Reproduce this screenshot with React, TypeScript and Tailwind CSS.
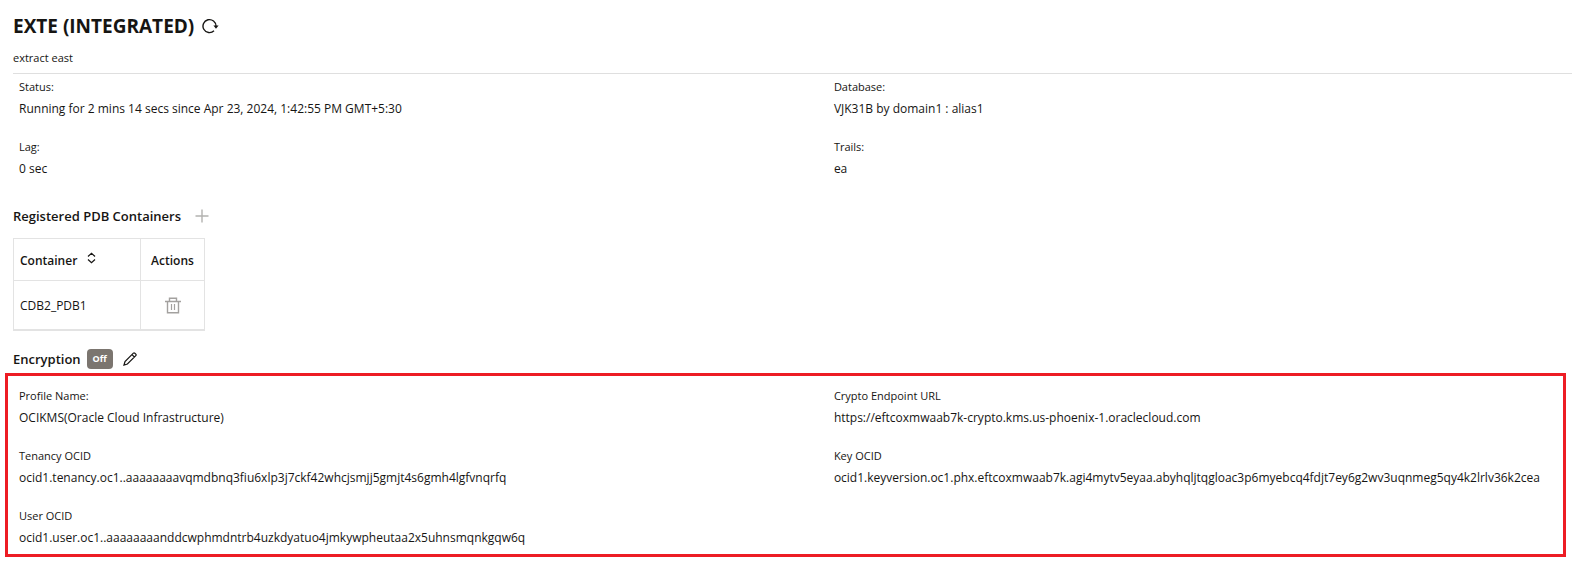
import { useState } from 'react';

type FieldData = { label: string; value: string };

const processInfo: FieldData[] = [
  { label: 'Status:', value: 'Running for 2 mins 14 secs since Apr 23, 2024, 1:42:55 PM GMT+5:30' },
  { label: 'Database:', value: 'VJK31B by domain1 : alias1' },
  { label: 'Lag:', value: '0 sec' },
  { label: 'Trails:', value: 'ea' },
];

const encryptionInfo: FieldData[] = [
  { label: 'Profile Name:', value: 'OCIKMS(Oracle Cloud Infrastructure)' },
  { label: 'Crypto Endpoint URL', value: 'https://eftcoxmwaab7k-crypto.kms.us-phoenix-1.oraclecloud.com' },
  { label: 'Tenancy OCID', value: 'ocid1.tenancy.oc1..aaaaaaaavqmdbnq3fiu6xlp3j7ckf42whcjsmjj5gmjt4s6gmh4lgfvnqrfq' },
  { label: 'Key OCID', value: 'ocid1.keyversion.oc1.phx.eftcoxmwaab7k.agi4mytv5eyaa.abyhqljtqgloac3p6myebcq4fdjt7ey6g2wv3uqnmeg5qy4k2lrlv36k2cea' },
  { label: 'User OCID', value: 'ocid1.user.oc1..aaaaaaaanddcwphmdntrb4uzkdyatuo4jmkywpheutaa2x5uhnsmqnkgqw6q' },
];

function FieldGrid({ fields }: { fields: FieldData[] }) {
  return (
    <dl className="grid grid-cols-[minmax(0,19fr)_minmax(0,17fr)] gap-y-5">
      {fields.map(({ label, value }) => (
        <div key={label}>
          <dt className="text-[11px] leading-4">{label}</dt>
          <dd className="mt-1 text-[12px] leading-5 whitespace-nowrap">{value}</dd>
        </div>
      ))}
    </dl>
  );
}

function RefreshIcon() {
  return (
    <svg width="18" height="16" viewBox="0 0 18 16" fill="none">
      <path d="M12 12.8A6.5 6.5 0 1 1 14 8.2" stroke="currentColor" strokeWidth="1.4" />
      <path d="M11.4 7.4h5.2L14 10.8z" fill="currentColor" />
    </svg>
  );
}

function PlusIcon() {
  return (
    <svg width="14" height="14" viewBox="0 0 14 14" fill="none" stroke="currentColor">
      <path d="M7 0.5v13M0.5 7h13" strokeWidth="1.4" />
    </svg>
  );
}

function SortIcon() {
  return (
    <svg width="9" height="12" viewBox="0 0 9 12" fill="none" stroke="currentColor">
      <path d="M1 4.5l3.5-3.3L8 4.5M1 7.5l3.5 3.3L8 7.5" strokeWidth="1.2" />
    </svg>
  );
}

function TrashIcon() {
  return (
    <svg width="16" height="17" viewBox="0 0 16 17" fill="none" stroke="currentColor">
      <path d="M0 4.5h16M4.5 4V1.2h7V4M2.5 5v10.7h11V5" strokeWidth="1.4" />
      <path d="M6.5 7v6M9.5 7v6" strokeWidth="1.2" />
    </svg>
  );
}

function PencilIcon() {
  return (
    <svg width="14" height="14" viewBox="0 0 14 14" fill="none" stroke="currentColor">
      <path d="M1 13l1-3.4L10.4 1.2a1 1 0 0 1 1.4 0l1 1a1 1 0 0 1 0 1.4L4.4 12zM9 2.6L11.4 5" strokeWidth="1.2" />
    </svg>
  );
}

export default function App() {
  const [ containers, setContainers ] = useState(['CDB2_PDB1']);

  const handleDelete = (name: string) => {
    setContainers(containers.filter((container) => container !== name))
  }

  return (
    <main className="bg-white pb-2 font-['Open_Sans',sans-serif] text-[#161513]">
      <header className="ml-[13px] border-b border-[#dfdfdf] pt-3 pb-[7px]">
        <div className="flex items-center gap-2">
          <h1 className="text-[19px] leading-7 font-bold">EXTE (INTEGRATED)</h1>
          <button type="button" aria-label="Refresh" className="cursor-pointer"><RefreshIcon /></button>
        </div>
        <p className="mt-[10px] text-[11px] leading-4">extract east</p>
      </header>

      <section className="pt-[5px] pr-[9px] pl-[19px]">
        <FieldGrid fields={processInfo} />
      </section>

      <section className="mt-[27px] ml-[13px]">
        <div className="flex items-center gap-[14px]">
          <h2 className="text-[13px] leading-5 font-semibold">Registered PDB Containers</h2>
          <button type="button" aria-label="Add container" className="cursor-pointer text-[#b3b2b0]"><PlusIcon /></button>
        </div>
        <table className="mt-3 border-collapse border border-b-2 border-[#e3e3e3] text-[12px]">
          <thead>
            <tr className="h-[42px]">
              <th className="w-[127px] border border-[#e3e3e3] px-[6px] pt-[2px] text-left font-semibold">
                <button type="button" className="flex cursor-pointer items-start gap-[10px]">
                  Container
                  <SortIcon />
                </button>
              </th>
              <th className="w-16 border border-[#e3e3e3] pt-[2px] text-center font-semibold">Actions</th>
            </tr>
          </thead>
          <tbody>
            {containers.map((container) => (
              <tr key={container} className="h-[49px]">
                <td className="border-r border-[#e3e3e3] px-[6px] pt-[3px]">{container}</td>
                <td className="text-center">
                  <button
                    type="button"
                    aria-label={`Delete ${container}`}
                    onClick={() => handleDelete(container)}
                    className="cursor-pointer align-middle text-[#a3a19f]"
                  >
                    <TrashIcon />
                  </button>
                </td>
              </tr>
            ))}
          </tbody>
        </table>
      </section>

      <section className="mt-[18px]">
        <div className="ml-[13px] flex items-center">
          <h2 className="text-[13px] leading-5 font-semibold">Encryption</h2>
          <span className="ml-[6px] rounded bg-[#7b756f] px-[6px] text-[9px] leading-5 font-bold text-white">Off</span>
          <button type="button" aria-label="Edit encryption" className="ml-[10px] cursor-pointer"><PencilIcon /></button>
        </div>
        <div className="mt-1 mr-[6px] ml-[5px] border-3 border-[#ed1c24] pt-3 pb-[6px] pl-[11px]">
          <FieldGrid fields={encryptionInfo} />
        </div>
      </section>
    </main>
  );
}
